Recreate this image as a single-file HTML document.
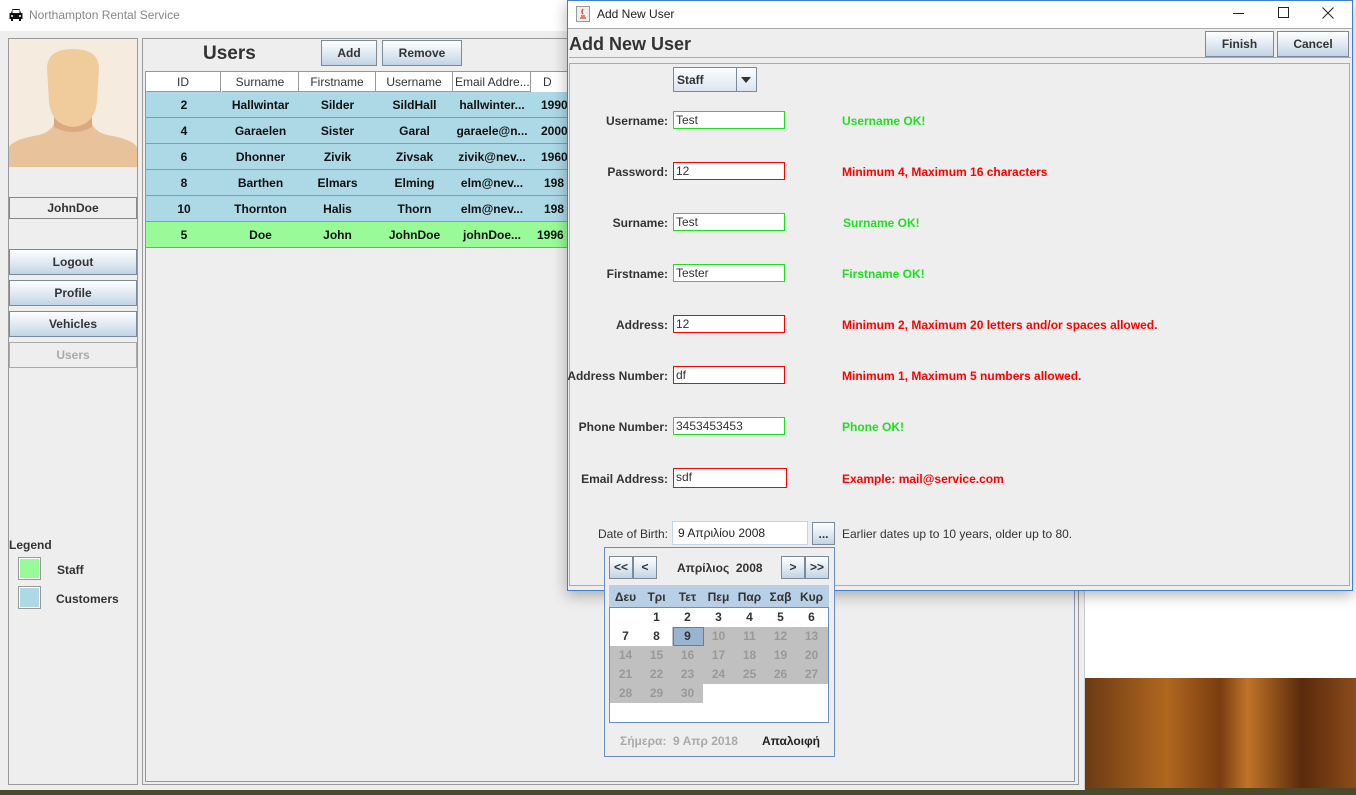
<!DOCTYPE html>
<html><head><meta charset="utf-8"><style>
*{box-sizing:border-box;margin:0;padding:0}
body{width:1356px;height:795px;position:relative;overflow:hidden;background:#fff;font-family:"Liberation Sans","DejaVu Sans",sans-serif;font-size:12px;color:#333}
.a{position:absolute}
.btn{position:absolute;border:1px solid #7a8a99;background:linear-gradient(#fdfeff,#dce6f0 60%,#c3d3e4);font-weight:bold;font-size:12px;text-align:center;color:#333}
.c{text-align:center;font-weight:bold;color:#111}
.lbl{position:absolute;font-weight:bold;text-align:right;width:140px;left:528px}
.fld{position:absolute;left:673px;width:112px;height:18px;background:#fff;border:1px solid;padding-left:2px;font-size:12px;line-height:16px;color:#333}
.msg{position:absolute;left:842px;font-weight:bold}
.g{border-color:#1ee01e}.r{border-color:#f00}
.gt{color:#1ee01e}.rt{color:#f00}
.cal td{width:31px;height:19px;text-align:center;font-weight:bold;font-size:12px}
</style></head><body>
<div class="a" style="left:1085px;top:678px;width:271px;height:117px;background:linear-gradient(90deg,#6b3a14,#b0671f 30%,#7a3d10 50%,#c07428 60%,#5a2a0c 80%,#8b4c1a)"></div>
<div class="a" style="left:0;top:788px;width:1356px;height:7px;background:#4a4a2a"></div>
<div class="a" style="left:0;top:0;width:1085px;height:790px;background:#eeeeee;border-right:1px solid #ccc">
  <div class="a" style="left:0;top:0;width:1085px;height:31px;background:#fff"></div>
  <svg class="a" style="left:8px;top:7px" width="16" height="16" viewBox="0 0 16 16"><path d="M3 6 L4.5 2 H11.5 L13 6 H14.5 V12 H13 V14 H11 V12 H5 V14 H3 V12 H1.5 V6Z" fill="#111"/><rect x="4.5" y="3" width="7" height="3" fill="#fff"/><circle cx="4" cy="9" r="1" fill="#fff"/><circle cx="12" cy="9" r="1" fill="#fff"/></svg>
  <div class="a" style="left:29px;top:8px;color:#888;font-size:12px">Northampton Rental Service</div>
  <div class="a" style="left:8px;top:38px;width:130px;height:747px;border:1px solid #999;background:#eee"></div>
  <div class="a" style="left:9px;top:39px;width:128px;height:128px;background:#f5ebdf;overflow:hidden">
    <svg width="128" height="128" viewBox="0 0 128 128"><path d="M0 128 V108 Q5 100 30 96 Q45 92 46 80 L82 80 Q83 92 98 96 Q123 100 128 108 V128Z" fill="#e8c29a"/><path d="M45 70 L45 88 Q64 98 83 88 L83 70Z" fill="#d9aa80"/><path d="M38 30 Q38 10 64 10 Q90 10 90 30 L88 62 Q86 86 64 88 Q42 86 40 62Z" fill="#f0cb9c"/></svg>
  </div>
  <div class="a" style="left:9px;top:197px;width:128px;height:22px;border:1px solid #888;text-align:center;line-height:20px;font-weight:bold">JohnDoe</div>
  <div class="btn" style="left:9px;top:249px;width:128px;height:26px;line-height:24px">Logout</div>
  <div class="btn" style="left:9px;top:280px;width:128px;height:26px;line-height:24px">Profile</div>
  <div class="btn" style="left:9px;top:311px;width:128px;height:26px;line-height:24px">Vehicles</div>
  <div class="a" style="left:9px;top:342px;width:128px;height:26px;line-height:24px;border:1px solid #aaa;text-align:center;font-weight:bold;color:#aaa">Users</div>
  <div class="a" style="left:9px;top:538px;font-weight:bold">Legend</div>
  <div class="a" style="left:18px;top:557px;width:23px;height:23px;border:1px solid #999;background:#98fb98;box-shadow:inset 0 0 0 1px #fff"></div>
  <div class="a" style="left:57px;top:563px;font-weight:bold">Staff</div>
  <div class="a" style="left:18px;top:586px;width:23px;height:23px;border:1px solid #999;background:#add8e6;box-shadow:inset 0 0 0 1px #fff"></div>
  <div class="a" style="left:56px;top:592px;font-weight:bold">Customers</div>
  <div class="a" style="left:142px;top:38px;width:937px;height:747px;border:1px solid #999"></div>
  <div class="a" style="left:203px;top:43px;font-size:19px;font-weight:bold;color:#333">Users</div>
  <div class="btn" style="left:321px;top:40px;width:56px;height:26px;line-height:24px">Add</div>
  <div class="btn" style="left:382px;top:40px;width:80px;height:26px;line-height:24px">Remove</div>
  <div class="a" style="left:145px;top:71px;width:930px;height:711px;border:1px solid #8899aa;background:#eee"></div>
  <div class="a" style="left:146px;top:72px;width:430px;height:20px;background:#fff"></div>
  <div class="a" style="left:146px;top:72px;font-size:12px;color:#333">
    <div class="a" style="left:0;width:75px;height:20px;border-right:1px solid #999;border-bottom:1px solid #999;text-align:center;line-height:20px">ID</div>
    <div class="a" style="left:76px;width:77px;height:20px;border-right:1px solid #999;border-bottom:1px solid #999;text-align:center;line-height:20px">Surname</div>
    <div class="a" style="left:153px;width:77px;height:20px;border-right:1px solid #999;border-bottom:1px solid #999;text-align:center;line-height:20px">Firstname</div>
    <div class="a" style="left:230px;width:77px;height:20px;border-right:1px solid #999;border-bottom:1px solid #999;text-align:center;line-height:20px">Username</div>
    <div class="a" style="left:307px;width:78px;height:20px;border-right:1px solid #999;border-bottom:1px solid #999;line-height:20px;padding-left:2px;white-space:nowrap;overflow:hidden">Email Addre...</div>
    <div class="a" style="left:385px;width:50px;height:20px;line-height:20px;padding-left:12px">D</div>
  </div>
  <div class="a" style="left:146px;top:92px;width:430px;font-size:13px">
    <div class="a" style="top:0;width:430px;height:26px;background:#add8e6;border-bottom:1px solid #8899aa"></div>
    <div class="a" style="top:26px;width:430px;height:26px;background:#add8e6;border-bottom:1px solid #8899aa"></div>
    <div class="a" style="top:52px;width:430px;height:26px;background:#add8e6;border-bottom:1px solid #8899aa"></div>
    <div class="a" style="top:78px;width:430px;height:26px;background:#add8e6;border-bottom:1px solid #8899aa"></div>
    <div class="a" style="top:104px;width:430px;height:26px;background:#add8e6;border-bottom:1px solid #8899aa"></div>
    <div class="a" style="top:130px;width:430px;height:26px;background:#98fb98;border-bottom:1px solid #8899aa"></div>
  </div>
  <div class="a" style="left:146px;top:92px;width:430px;font-size:12px">
    <table style="border-collapse:collapse;table-layout:fixed;width:460px">
      <col style="width:76px"><col style="width:77px"><col style="width:77px"><col style="width:77px"><col style="width:78px"><col style="width:75px">
      <tr style="height:26px"><td class="c">2</td><td class="c">Hallwintar</td><td class="c">Silder</td><td class="c">SildHall</td><td class="c">hallwinter...</td><td class="c" style="text-align:left;padding-left:10px">1990</td></tr>
      <tr style="height:26px"><td class="c">4</td><td class="c">Garaelen</td><td class="c">Sister</td><td class="c">Garal</td><td class="c">garaele@n...</td><td class="c" style="text-align:left;padding-left:10px">2000</td></tr>
      <tr style="height:26px"><td class="c">6</td><td class="c">Dhonner</td><td class="c">Zivik</td><td class="c">Zivsak</td><td class="c">zivik@nev...</td><td class="c" style="text-align:left;padding-left:10px">1960</td></tr>
      <tr style="height:26px"><td class="c">8</td><td class="c">Barthen</td><td class="c">Elmars</td><td class="c">Elming</td><td class="c">elm@nev...</td><td class="c" style="text-align:left;padding-left:13px">198</td></tr>
      <tr style="height:26px"><td class="c">10</td><td class="c">Thornton</td><td class="c">Halis</td><td class="c">Thorn</td><td class="c">elm@nev...</td><td class="c" style="text-align:left;padding-left:13px">198</td></tr>
      <tr style="height:26px"><td class="c">5</td><td class="c">Doe</td><td class="c">John</td><td class="c">JohnDoe</td><td class="c">johnDoe...</td><td class="c" style="text-align:left;padding-left:6px">1996</td></tr>
    </table>
  </div>
</div>
<div class="a" style="left:567px;top:0;width:786px;height:591px;background:#eeeeee;border:1px solid #3c7fd0;box-shadow:0 4px 14px rgba(0,0,0,.3)">
  <div class="a" style="left:0;top:0;width:784px;height:28px;background:#fff;border-bottom:1px solid #aaa"></div>
  <svg class="a" style="left:8px;top:5px" width="14" height="16" viewBox="0 0 14 16"><rect x="0.5" y="0.5" width="13" height="15" fill="#eee" stroke="#999"/><path d="M7 3 Q5 6 7 8 M5 10 H9 M4 12 H10" stroke="#d04020" fill="none" stroke-width="1.3"/></svg>
  <div class="a" style="left:29px;top:6px;color:#222">Add New User</div>
  <div class="a" style="left:665px;top:12px;width:11px;height:1px;background:#222"></div>
  <div class="a" style="left:710px;top:6px;width:11px;height:11px;border:1px solid #222"></div>
  <svg class="a" style="left:754px;top:6px" width="12" height="12"><path d="M0.5 0.5 L11.5 11.5 M11.5 0.5 L0.5 11.5" stroke="#222"/></svg>
  <div class="a" style="left:1px;top:33px;font-size:18px;font-weight:bold;color:#333">Add New User</div>
  <div class="btn" style="left:637px;top:30px;width:69px;height:26px;line-height:24px">Finish</div>
  <div class="btn" style="left:709px;top:30px;width:72px;height:26px;line-height:24px">Cancel</div>
  <div class="a" style="left:1px;top:56px;width:782px;height:1px;background:#aaa"></div>
  <div class="a" style="left:1px;top:62px;width:781px;height:523px;border:1px solid #aaa"></div>
</div>
<div class="a" style="left:673px;top:67px;width:84px;height:25px;border:1px solid #7a8a99;background:linear-gradient(#fafcfe,#dce6f0)"></div>
<div class="a" style="left:677px;top:73px;font-weight:bold;color:#333">Staff</div>
<div class="a" style="left:736px;top:68px;width:20px;height:23px;border-left:1px solid #7a8a99"></div>
<svg class="a" style="left:740px;top:76px" width="12" height="8"><path d="M1 1 H11 L6 7Z" fill="#333"/></svg>

<div class="lbl" style="top:114px">Username:</div><div class="fld g" style="top:111px">Test</div><div class="msg gt" style="top:114px">Username OK!</div>
<div class="lbl" style="top:165px">Password:</div><div class="fld r" style="top:162px">12</div><div class="msg rt" style="top:165px">Minimum 4, Maximum 16 characters</div>
<div class="lbl" style="top:216px">Surname:</div><div class="fld g" style="top:213px">Test</div><div class="msg gt" style="top:216px;left:843px">Surname OK!</div>
<div class="lbl" style="top:267px">Firstname:</div><div class="fld g" style="top:264px">Tester</div><div class="msg gt" style="top:267px">Firstname OK!</div>
<div class="lbl" style="top:318px">Address:</div><div class="fld r" style="top:315px">12</div><div class="msg rt" style="top:318px">Minimum 2, Maximum 20 letters and/or spaces allowed.</div>
<div class="lbl" style="top:369px">Address Number:</div><div class="fld r" style="top:366px">df</div><div class="msg rt" style="top:369px">Minimum 1, Maximum 5 numbers allowed.</div>
<div class="lbl" style="top:420px">Phone Number:</div><div class="fld g" style="top:417px">3453453453</div><div class="msg gt" style="top:420px">Phone OK!</div>
<div class="lbl" style="top:472px">Email Address:</div><div class="fld r" style="top:468px;width:114px;height:20px">sdf</div><div class="msg rt" style="top:472px">Example: mail@service.com</div>
<div class="lbl" style="top:527px;font-weight:normal">Date of Birth:</div>
<div class="a" style="left:672px;top:521px;width:136px;height:24px;background:#fff;border:1px solid #c5d5e8;padding:4px 0 0 5px;color:#222">9 Απριλίου 2008</div>
<div class="btn" style="left:812px;top:522px;width:23px;height:23px;line-height:22px">...</div>
<div class="a" style="left:842px;top:527px;color:#333">Earlier dates up to 10 years, older up to 80.</div>
<div class="a" style="left:604px;top:547px;width:231px;height:210px;background:#eee;border:1px solid #6a8cc8">
  <div class="btn" style="left:4px;top:8px;width:24px;height:23px;line-height:21px">&lt;&lt;</div>
  <div class="btn" style="left:28px;top:8px;width:24px;height:23px;line-height:21px">&lt;</div>
  <div class="a" style="left:72px;top:13px;font-weight:bold;color:#333">Απρίλιος&nbsp; 2008</div>
  <div class="btn" style="left:176px;top:8px;width:24px;height:23px;line-height:21px">&gt;</div>
  <div class="btn" style="left:200px;top:8px;width:24px;height:23px;line-height:21px">&gt;&gt;</div>
  <div class="a" style="left:4px;top:37px;width:220px;height:22px;background:#b8cfe5"></div>
  <div class="a" style="left:4px;top:59px;width:220px;height:116px;background:#fff;border:1px solid #6a8cc8"></div>
  <div class="a" style="left:5px;top:79px;width:218px;height:57px;background:#c0c0c0"></div>
  <div class="a" style="left:5px;top:136px;width:93px;height:19px;background:#c0c0c0"></div>
  <div class="a" style="left:5px;top:79px;width:62px;height:19px;background:#fff"></div>
  <div class="a" style="left:68px;top:79px;width:31px;height:19px;background:#99b4d1;border:1px solid #5a7fb8"></div>
  <table class="a cal" style="left:5px;top:38px;border-collapse:collapse">
    <tr style="height:21px"><td>Δευ</td><td>Τρι</td><td>Τετ</td><td>Πεμ</td><td>Παρ</td><td>Σαβ</td><td>Κυρ</td></tr>
    <tr><td></td><td>1</td><td>2</td><td>3</td><td>4</td><td>5</td><td>6</td></tr>
    <tr><td>7</td><td>8</td><td>9</td><td style="color:#999">10</td><td style="color:#999">11</td><td style="color:#999">12</td><td style="color:#999">13</td></tr>
    <tr><td style="color:#999">14</td><td style="color:#999">15</td><td style="color:#999">16</td><td style="color:#999">17</td><td style="color:#999">18</td><td style="color:#999">19</td><td style="color:#999">20</td></tr>
    <tr><td style="color:#999">21</td><td style="color:#999">22</td><td style="color:#999">23</td><td style="color:#999">24</td><td style="color:#999">25</td><td style="color:#999">26</td><td style="color:#999">27</td></tr>
    <tr><td style="color:#999">28</td><td style="color:#999">29</td><td style="color:#999">30</td><td></td><td></td><td></td><td></td></tr>
  </table>
  <div class="a" style="left:15px;top:186px;font-weight:bold;color:#aaa">Σήμερα:&nbsp; 9 Απρ 2018</div>
  <div class="a" style="left:157px;top:186px;font-weight:bold;color:#222">Απαλοιφή</div>
</div>
</body></html>
